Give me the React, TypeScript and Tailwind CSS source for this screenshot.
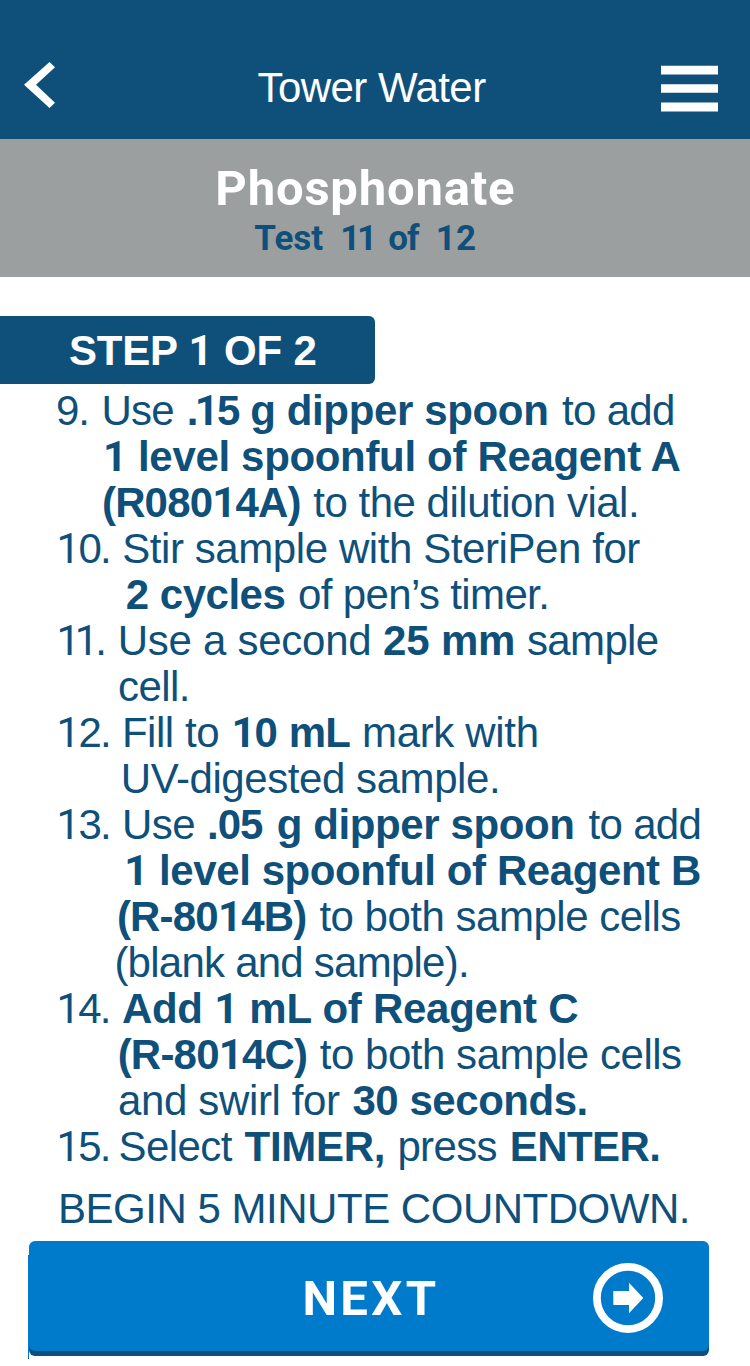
type Run = { text: string; style: string };

const r = (text: string, style: string): Run => ({ text, style });
const b = (text: string, style: string): Run => ({ text, style: `font-bold ${style}` });

const lines: Run[][] = [
  [
    r("9. ", "ml-[56px] tracking-[-1px]"),
    r("Use ", "ml-[1.7px] tracking-[-0.7px]"),
    b(".", "ml-[1.8px] tracking-[-3.6px]"),
    b("1", "tracking-[-2px]"),
    b("5 ", "tracking-[-1px]"),
    b("g dipper spoon ", "ml-[0.2px] tracking-[-0.36px]"),
    r("to add", "ml-[2.2px] tracking-[-0.66px]"),
  ],
  [b("1 level spoonful of Reagent A", "ml-[102.9px] tracking-[-0.33px]")],
  [b("(R08014A) ", "ml-[102px] tracking-[-0.85px]"), r("to the dilution vial.", "ml-[2px] tracking-[-0.5px]")],
  [r("10. ", "ml-[56.5px] tracking-[-1.7px]"), r("Stir sample with SteriPen for", "ml-[2.2px] tracking-[-0.42px]")],
  [b("2 cycles ", "ml-[125.8px] tracking-[-0.5px]"), r("of pen’s timer.", "ml-[1.6px] tracking-[-0.64px]")],
  [
    r("1", "ml-[56.5px] tracking-[-5.4px]"),
    r("1", "tracking-[-3px]"),
    r(". ", "tracking-[-2px]"),
    r("Use a second ", "ml-[3px] tracking-[-0.26px]"),
    b("25 mm ", "ml-[0.2px] tracking-[-0.15px]"),
    r("sample", "ml-[0.2px] tracking-[-0.66px]"),
  ],
  [r("cell.", "ml-[118px] tracking-[-0.58px]")],
  [
    r("12. ", "ml-[56.5px] tracking-[-1.7px]"),
    r("Fill to ", "ml-[1.9px] tracking-[-0.45px]"),
    b("1", "ml-[1.2px] tracking-[-1.2px]"),
    b("0 ", "tracking-[-0.3px]"),
    b("mL ", "tracking-[-0.9px]"),
    r("mark with", "ml-[1.9px] tracking-[-0.33px]"),
  ],
  [r("UV-digested sample.", "ml-[120.8px] tracking-[-0.43px]")],
  [
    r("13. ", "ml-[56.5px] tracking-[-1.7px]"),
    r("Use ", "ml-[1.9px] tracking-[-0.5px]"),
    b(".05 ", "ml-[0.8px] tracking-[-1px]"),
    b("g dipper spoon ", "ml-[3.6px] tracking-[-0.4px]"),
    r("to add", "ml-[2.8px] tracking-[-0.68px]"),
  ],
  [b("1 level spoonful of Reagent B", "ml-[124.2px] tracking-[-0.42px]")],
  [b("(R-8014B) ", "ml-[116.9px] tracking-[-0.8px]"), r("to both sample cells", "ml-[2px] tracking-[-0.49px]")],
  [r("(blank and sample).", "ml-[114.4px] tracking-[-0.76px]")],
  [r("14. ", "ml-[56.5px] tracking-[-1.9px]"), b("Add 1 mL of Reagent C", "ml-[2.7px] tracking-[-0.27px]")],
  [b("(R-8014C) ", "ml-[117.7px] tracking-[-0.8px]"), r("to both sample cells", "ml-[1.5px] tracking-[-0.46px]")],
  [r("and swirl for ", "ml-[118px] tracking-[-0.36px]"), b("30 seconds.", "ml-[1.4px] tracking-[-0.46px]")],
  [
    r("15. ", "ml-[56.5px] tracking-[-1.8px]"),
    r("Select ", "ml-[-1px] tracking-[-0.6px]"),
    b("TIMER, ", "ml-[1.8px] tracking-[-0.3px]"),
    r("press ", "ml-[0.9px] tracking-[-0.65px]"),
    b("ENTER.", "ml-[1.8px] tracking-[-0.55px]"),
  ],
];

// Roboto's "1" is a plain stem without a foot.
function Digits({ text }: { text: string }) {
  return text.split(/(1)/).map((part, i) =>
    part === "1" ? (
      <span key={i} className="font-[Roboto,sans-serif] leading-none">
        1
      </span>
    ) : (
      part
    ),
  );
}

export default function App() {
  return (
    <div className="flex h-[1366px] w-[750px] flex-col overflow-hidden bg-white font-['Liberation_Sans',Arial,sans-serif] text-[#0f507b]">
      <header className="flex h-[139px] shrink-0 items-start bg-[#0f507b] pl-[24px] pr-[32px] pt-[62px] text-white">
        <svg width="31" height="46" viewBox="0 0 31 46" aria-label="Back">
          <path d="M25.5 0 31 5.3 12 22.8 31 40.7 25.5 46 0 22.8Z" fill="currentColor" />
        </svg>
        <h1 className="ml-[202.5px] mt-px text-[42px] leading-[50px] tracking-[-0.55px]">Tower Water</h1>
        <svg className="ml-auto" width="57" height="50" viewBox="0 0 57 50" aria-label="Menu">
          <path d="M0 3.7H57V12.5H0ZM0 22.2H57V30.8H0ZM0 40.6H57V49.4H0Z" fill="currentColor" />
        </svg>
      </header>
      <section className="h-[138px] shrink-0 whitespace-pre bg-[#9c9fa0] pt-[22px] font-[Roboto,sans-serif] font-bold">
        <h2 className="ml-[215.3px] text-[49px] leading-[56px] tracking-[0.8px] text-white">Phosphonate</h2>
        <p className="mt-[2px] text-[35px] leading-[40px]">
          <span className="ml-[254.3px]">Test </span>
          <span className="ml-[8.5px] tracking-[-3.4px]">11 </span>
          <span className="ml-[9.3px] tracking-[-1px]">of </span>
          <span className="ml-[9.5px]">12</span>
        </p>
      </section>
      <main className="flex flex-col pt-[39px]">
        <div className="flex h-[68px] w-[375px] items-center rounded-r-[6px] bg-[#0f507b] pl-[69px] pt-[2px] text-[42px] font-bold leading-none tracking-[-0.2px] text-white">
          <p className="whitespace-pre">
            <Digits text="STEP 1 OF 2" />
          </p>
        </div>
        <div className="pt-[4px] text-[42px] leading-[46px]">
          {lines.map((line, i) => (
            <p key={i} className="h-[46px] whitespace-pre">
              {line.map((run, j) => (
                <span key={j} className={run.style}>
                  <Digits text={run.text} />
                </span>
              ))}
            </p>
          ))}
        </div>
        <p className="whitespace-pre pl-[58px] pt-[16px] text-[42px] leading-[46px] tracking-[-0.48px]">
          BEGIN 5 MINUTE COUNTDOWN.
        </p>
      </main>
      <div className="ml-[28px] mt-[9px] flex h-[118px] w-[681px] shrink-0 items-start">
        <div className="mt-[14px] h-[104px] w-px border-b-2 border-[#0f507b] bg-[#007acb]" />
        <button className="flex h-[110px] flex-1 items-center rounded-[6px] bg-[#007acb] pl-[273.5px] pt-[4px] text-white shadow-[0_5px_0_#0f507b]">
          <span className="mt-px font-[Roboto,sans-serif] text-[49px] font-bold leading-[58px] tracking-[3.3px]">NEXT</span>
          <svg className="ml-auto mr-[46px]" width="70" height="70" viewBox="0 0 70 70">
            <circle cx="35" cy="35" r="31.1" fill="none" stroke="currentColor" strokeWidth="7.8" />
            <path d="M20.3 28H36V19.7L50.3 35 36 50.3V42H20.3Z" fill="currentColor" />
          </svg>
        </button>
      </div>
    </div>
  );
}
